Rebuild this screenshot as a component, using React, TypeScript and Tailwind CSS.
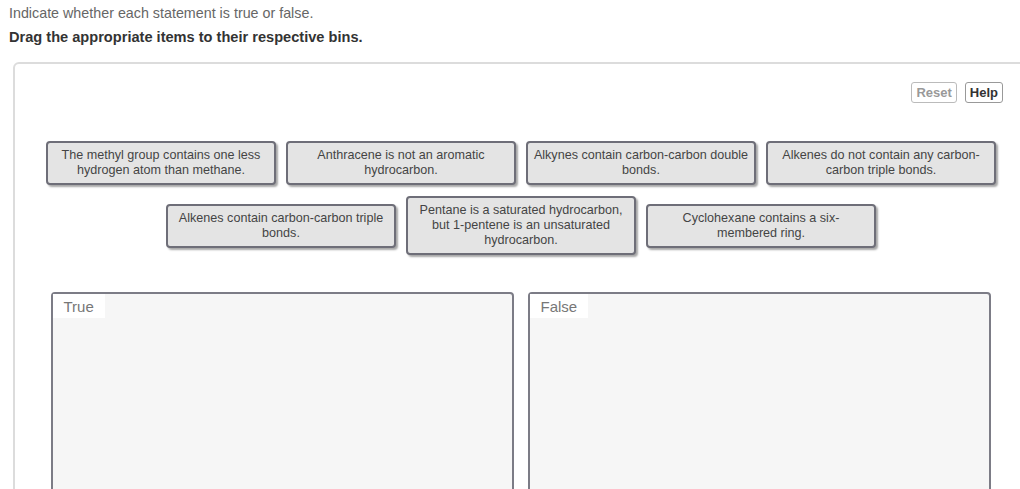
import React from 'react';

const items: string[][] = [
  ['The methyl group contains one less', 'hydrogen atom than methane.'],
  ['Anthracene is not an aromatic', 'hydrocarbon.'],
  ['Alkynes contain carbon-carbon double', 'bonds.'],
  ['Alkenes do not contain any carbon-', 'carbon triple bonds.'],
  ['Alkenes contain carbon-carbon triple', 'bonds.'],
  ['Pentane is a saturated hydrocarbon,', 'but 1-pentene is an unsaturated', 'hydrocarbon.'],
  ['Cyclohexane contains a six-', 'membered ring.'],
];

const Card = ({ lines }: { lines: string[] }) => (
  <div className="w-[230px] border-2 border-[#6e6e78] rounded-[4px] bg-[#e4e4e4] px-[2px] py-[5px] text-center text-[12.6px] leading-[15px] text-[#444] shadow-[2px_2px_2px_rgba(0,0,0,0.35)]">
    {lines.map((l) => (
      <div key={l} className="whitespace-nowrap">{l}</div>
    ))}
  </div>
);

const Bin = ({ label }: { label: string }) => (
  <div className="w-[463px] h-[260px] border-2 border-[#7c7c86] rounded-[4px] bg-[#f6f6f6]">
    <div className="inline-block bg-white px-[11px] pt-[5px] pb-[3px] text-[15px] leading-[16px] text-[#777]">{label}</div>
  </div>
);

export default function App() {
  return (
    <div className="h-[489px] w-[1020px] overflow-hidden bg-white font-['Liberation_Sans',Arial,sans-serif]">
      <div className="px-[9px] pt-[5px]">
        <p className="text-[14.3px] leading-[16px] text-[#666]">Indicate whether each statement is true or false.</p>
        <p className="mt-[8px] text-[14.6px] leading-[16px] font-bold text-[#333]">Drag the appropriate items to their respective bins.</p>
      </div>
      <div className="ml-[13px] mt-[17px] w-[1016px] border-2 border-[#dcdcdc] rounded-[6px] pt-[18px]">
        <div className="flex justify-end gap-[8px] pr-[24px]">
          <button className="h-[21px] px-[4px] border border-[#bbb] rounded-[3px] text-[13px] font-bold text-[#999]">Reset</button>
          <button className="h-[21px] px-[4px] border border-[#999] rounded-[3px] text-[13px] font-bold text-[#333]">Help</button>
        </div>
        <div className="mx-auto mt-[38px] flex w-[950px] flex-wrap items-center justify-center gap-x-[10px] gap-y-[11px]">
          {items.map((l) => (
            <Card key={l[0]} lines={l} />
          ))}
        </div>
        <div className="mt-[37px] flex justify-center gap-[14px] pr-[1px]">
          <Bin label="True" />
          <Bin label="False" />
        </div>
      </div>
    </div>
  );
}
